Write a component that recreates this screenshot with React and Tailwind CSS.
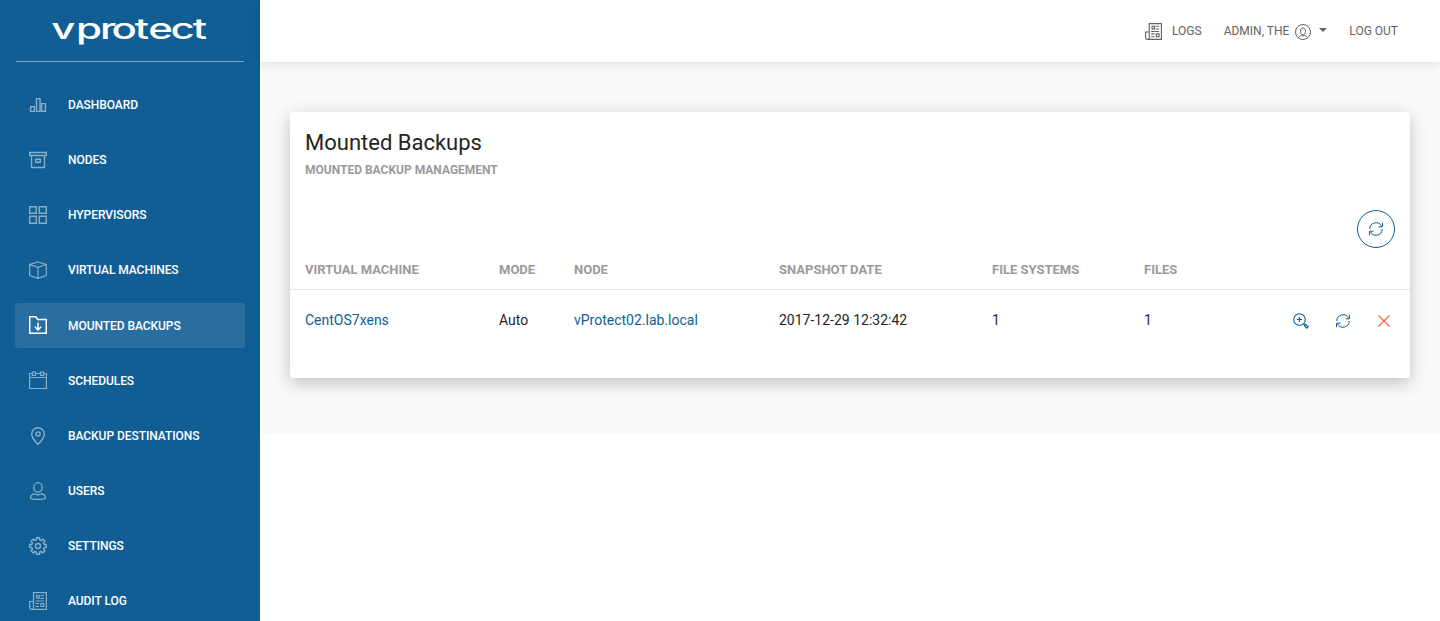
import React from "react";

function Glyph({ size = 18, weight = 1.2, className, children }) {
  return (
    <svg viewBox={`0 0 ${size} ${size}`} fill="none" stroke="currentColor" strokeWidth={weight} className={className}>
      {children}
    </svg>
  );
}

const BarChart = ({ className }) => (
  <Glyph weight={1.4} className={className}>
    <path d="M1.600 10.600h3.800v4.800H1.600zM7.500 2.600h3.500v12.800H7.500zM12.600 7.600h3.800v7.800h-3.800z" />
  </Glyph>
);
const Archive = ({ className }) => (
  <Glyph weight={1.4} className={className}>
    <path d="M.7 1.500h16.600v3H.7zM2.500 4.500v12h13v-12M6.700 8.300h4.600v2.900H6.700z" />
  </Glyph>
);
const Tiles = ({ className }) => (
  <Glyph weight={1.4} className={className}>
    <path d="M.7.700h6.600v6.600H.7zM10.300.700h7v6.600h-7zM.7 10.300h6.600v7H.7zM10.300 10.300h7v7h-7z" />
  </Glyph>
);
const Cube = ({ className }) => (
  <Glyph className={className}>
    <path d="M9 1l8.300 2.500v11L9 17.300.7 14.500v-11zM.7 3.500L9 6.300l8.300-2.800M9 6.300v11" />
  </Glyph>
);
const FolderDown = ({ className }) => (
  <Glyph weight={1.500} className={className}>
    <path d="M.7.800h6l2 2.700h8.600v13.800H.7zM9 6.500v7.300M5.800 10.800L9 14l3.200-3.200" />
  </Glyph>
);
const Calendar = ({ className }) => (
  <Glyph className={className}>
    <path d="M3.500 2.500H.6v15h16.800v-15h-2.900M6.500 2.500h5M.6 6.500h16.800M3.500 1h3v3.500h-3zM11.500 1h3v3.500h-3z" />
  </Glyph>
);
const Pin = ({ className }) => (
  <Glyph weight={1.400} className={className}>
    <path d="M9 17.300C5 13.500 2.700 10.300 2.700 7a6.300 6.300 0 0 1 12.600 0c0 3.300-2.300 6.500-6.300 10.300z" />
    <circle cx="9" cy="7" r="2.100" />
  </Glyph>
);
const Person = ({ className }) => (
  <Glyph weight={1.300} className={className}>
    <ellipse cx="9" cy="5.400" rx="4.200" ry="4.700" />
    <path d="M5.500 11.700c-2.500.7-4 2.100-4 4.500 2.500 1.500 12.500 1.500 15 0 0-2.400-1.500-3.800-4-4.500-2 1.200-5 1.200-7 0z" />
  </Glyph>
);

const gearPath =
  Array.from({ length: 8 }, (_, i) =>
    [[-14, 6.4], [-11, 8.400], [11, 8.400], [14, 6.4]].map(([offset, r]) => {
      const a = ((i * 45 + offset) * Math.PI) / 180;
      return `${(9 + r * Math.sin(a)).toFixed(2)} ${(9 - r * Math.cos(a)).toFixed(2)}`;
    }).join("L")
  ).reduce((d, tooth) => (d ? `${d}L${tooth}` : `M${tooth}`), "") + "z";

const Gear = ({ className }) => (
  <Glyph weight={1.400} className={className}>
    <path strokeLinejoin="round" d={gearPath} />
    <circle cx="9" cy="9" r="2.500" />
  </Glyph>
);
const Newspaper = ({ className }) => (
  <Glyph className={className}>
    <path d="M4.500 15.500V.600h12.900v16.800H2.600c-1.300 0-2-.7-2-2V9.500h3.900M4.500 15.500c0 1.300-.7 2-2 2" />
    <path d="M7.500 3.500h2.700v2.700H7.500zM11.500 3.500h3.500M11.500 6.300h3.500M6.500 9h8.500M6.500 11.500h3.500M6.500 14.500h3.500M12 11.500h2.900v3H12z" />
  </Glyph>
);
const UserCircle = ({ className }) => (
  <Glyph size={16} weight={1} className={className}>
    <circle cx="8" cy="8" r="7.500" />
    <path d="M8 4c1.800 0 2.500 1.200 2.500 3.200S9.500 11 8 11 5.500 9.200 5.500 7.200 6.200 4 8 4zM3.500 13.700c.5-1.200 1.500-1.700 3-2.200 1 .5 2 .5 3 0 1.500.5 2.500 1 3 2.200" />
  </Glyph>
);
const Refresh = ({ className }) => (
  <Glyph size={14} weight={1} className={className}>
    <path d="M.8 7A6.200 6.200 0 0 1 12.600 4.300M13.200 7A6.200 6.200 0 0 1 1.400 9.700M13.500.8v4h-4M.5 13.200v-4h4" />
  </Glyph>
);
const ZoomIn = ({ className }) => (
  <Glyph size={16} weight={1.100} className={className}>
    <circle cx="6.500" cy="6.500" r="5.800" />
    <path d="M6.500 4v5M4 6.500h5M10.800 10.800l1 1M11.300 12.700l1.400-1.400 2.500 2.500-1.400 1.400z" />
  </Glyph>
);
const Cross = ({ className }) => (
  <Glyph size={12} className={className}>
    <path d="M.5.5l11 11M11.500.5l-11 11" />
  </Glyph>
);

const items = [
  ["DASHBOARD", BarChart],
  ["NODES", Archive],
  ["HYPERVISORS", Tiles],
  ["VIRTUAL MACHINES", Cube],
  ["MOUNTED BACKUPS", FolderDown],
  ["SCHEDULES", Calendar],
  ["BACKUP DESTINATIONS", Pin],
  ["USERS", Person],
  ["SETTINGS", Gear],
  ["AUDIT LOG", Newspaper],
];

function Sidebar() {
  return (
    <aside className="h-full w-[260px] shrink-0 overflow-hidden bg-[#115e95] px-[15px] text-white">
      <div className="mx-px flex h-[62px] justify-center border-b border-[#7ba6c6] pt-[9px]">
        <svg viewBox="0 0 160 40" className="h-10 w-40">
          <text transform="scale(1.5 1)" x="0.9 17.3 33.400 41 56.500 65.500 80.300 95.200" y="30" fill="currentColor" className="font-['Inter',sans-serif] text-[28px] font-medium">vprotect</text>
        </svg>
      </div>
      <nav className="mt-[20.500px] flex flex-col gap-[10px]">
        {items.map(([label, Icon]) => (
          <a key={label} className={label === "MOUNTED BACKUPS" ? "flex h-[45.180px] shrink-0 items-center rounded-[3px] bg-white/10 pl-[14px]" : "flex h-[45.180px] shrink-0 items-center pl-[14px]"}>
            <Icon className={label === "MOUNTED BACKUPS" ? "-mt-px size-[18px]" : "-mt-px size-[18px] opacity-50"} />
            <span className="-mt-[0.300px] ml-[21px] text-[12px] leading-[30px] font-medium tracking-[-0.060px]">{label}</span>
          </a>
        ))}
      </nav>
    </aside>
  );
}

export default function App() {
  return (
    <div className="flex h-[621px] w-[1440px] overflow-hidden bg-white font-['Roboto',sans-serif] text-[14px] text-[#252422]">
      <Sidebar />
      <div className="flex min-w-0 flex-1 flex-col">
        <header className="z-10 flex h-[62px] shrink-0 items-center justify-end bg-white pr-[42px] text-[12px] text-[#66615b] shadow-[0_2px_12px_rgba(0,0,0,0.12)]">
          <Newspaper className="mt-px mr-[10px] size-[17px]" />
          <span>LOGS</span>
          <span className="ml-[22px]">ADMIN, THE</span>
          <UserCircle className="mt-[2px] ml-[6px] size-4" />
          <span className="-mt-[2px] ml-[8px] border-x-4 border-t-4 border-x-transparent border-t-[#66615b]" />
          <span className="ml-[22px]">LOG OUT</span>
        </header>
        <main className="h-[372px] bg-[#fafafa] px-[30px] pt-[50px]">
          <section className="h-[266px] rounded-[3px] bg-white shadow-[0_5px_18px_rgba(0,0,0,0.24)]">
            <div className="flex h-[98px] flex-col px-[15px] pt-[15px]">
              <h1 className="text-[22px] leading-[31px] font-normal">Mounted Backups</h1>
              <p className="mt-[2px] text-[12px] leading-[20px] font-bold text-[#9a9a9a]">MOUNTED BACKUP MANAGEMENT</p>
            </div>
            <div className="flex justify-end pr-[15px]">
              <button className="flex size-[38px] items-center justify-center rounded-full border border-[#115e95] text-[#115e95]">
                <Refresh className="size-[14px]" />
              </button>
            </div>
            <div className="grid h-[42px] grid-cols-[194px_75px_205px_213px_152px_1fr] items-center border-b border-[#e4e4e4] pt-[3px] pl-[15px] text-[13px] font-bold text-[#9a9a9a]">
              <span>VIRTUAL MACHINE</span><span>MODE</span><span>NODE</span><span>SNAPSHOT DATE</span><span>FILE SYSTEMS</span><span>FILES</span>
            </div>
            <div className="grid h-[61px] grid-cols-[194px_75px_205px_213px_152px_1fr] items-center pl-[15px]">
              <span className="text-[#115e95]">CentOS7xens</span>
              <span>Auto</span>
              <span className="text-[#115e95]">vProtect02.lab.local</span>
              <span>2017-12-29 12:32:42</span>
              <span className="text-[#252460]">1</span>
              <div className="flex items-center justify-between pr-[20px]">
                <span className="text-[#252460]">1</span>
                <div className="mt-px flex items-center text-[#115e95]">
                  <ZoomIn className="size-4" />
                  <Refresh className="ml-[27px] size-[14px]" />
                  <Cross className="ml-[28px] size-[12px] text-[#f2643c]" />
                </div>
              </div>
            </div>
          </section>
        </main>
      </div>
    </div>
  );
}
